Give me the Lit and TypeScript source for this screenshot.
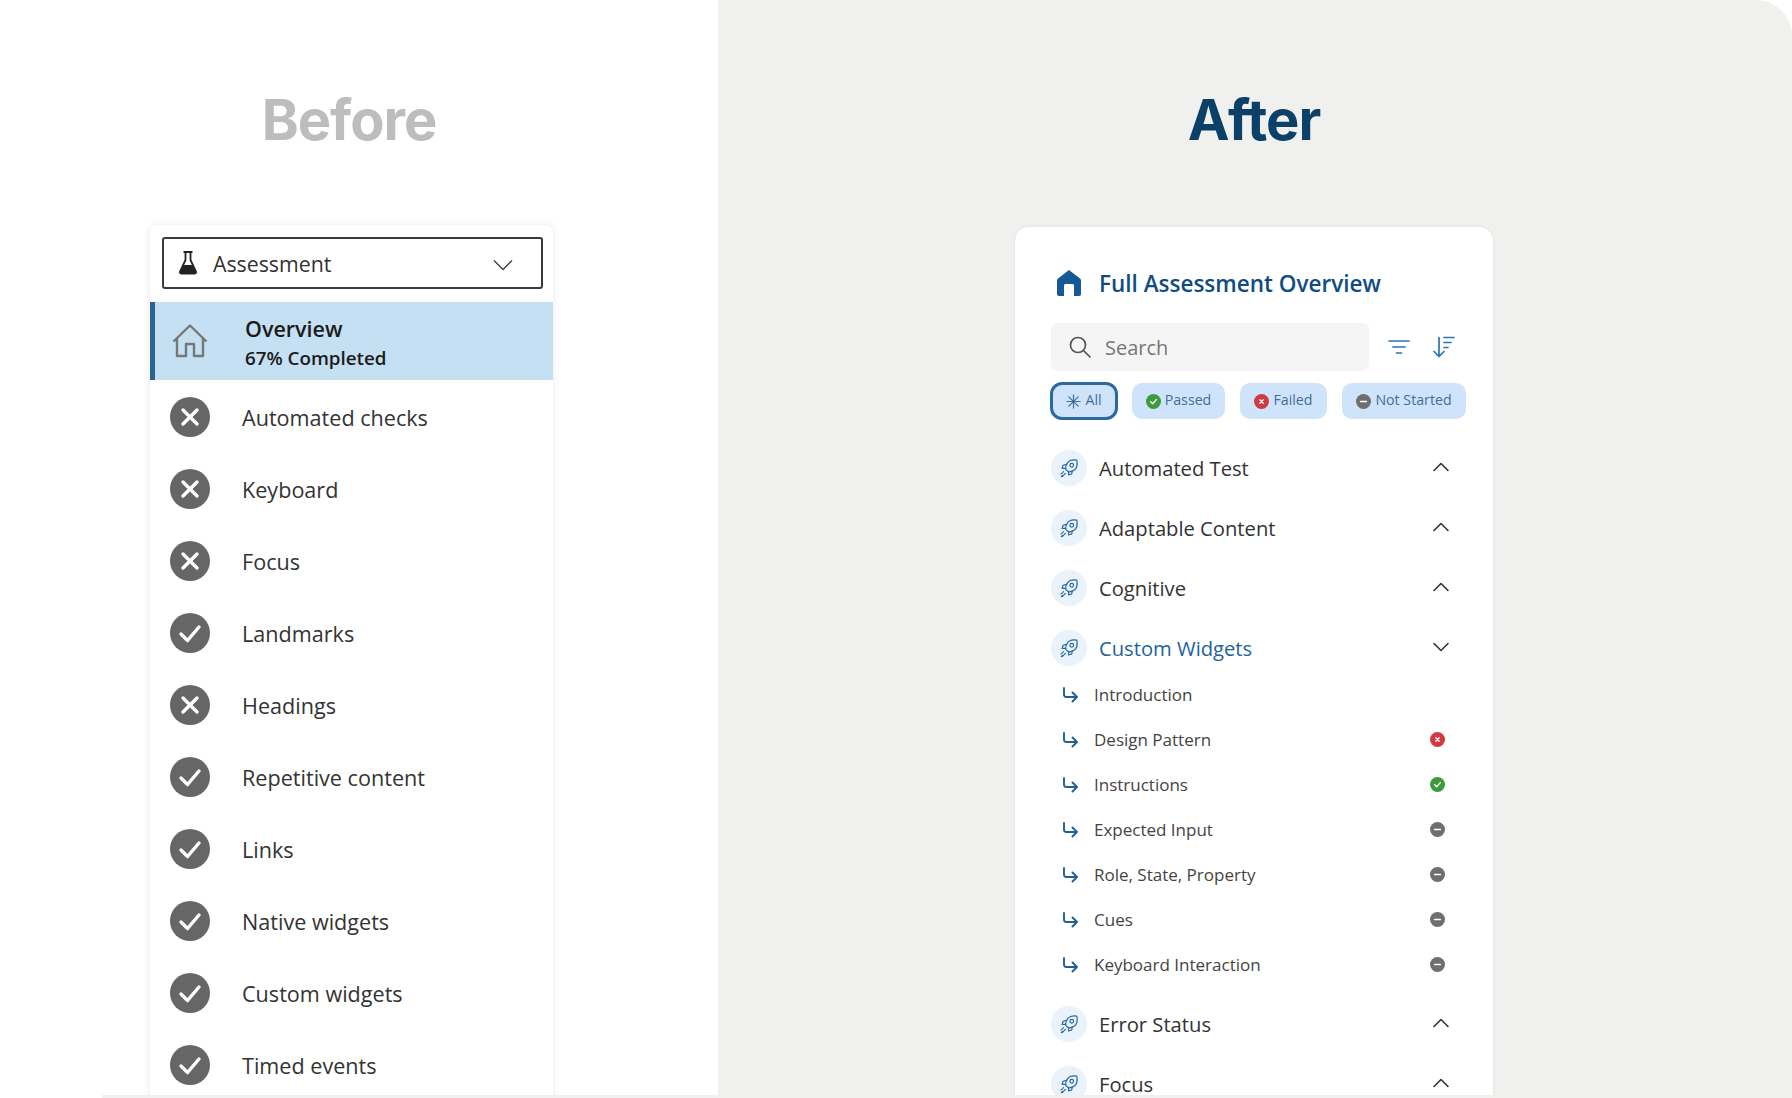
import { LitElement, html, css, svg } from "lit";
import { customElement } from "lit/decorators.js";

type Status = "pass" | "fail" | "none" | "";

const checks: [string, boolean][] = [
  ["Automated checks", false],
  ["Keyboard", false],
  ["Focus", false],
  ["Landmarks", true],
  ["Headings", false],
  ["Repetitive content", true],
  ["Links", true],
  ["Native widgets", true],
  ["Custom widgets", true],
  ["Timed events", true],
];

const subItems: [string, Status][] = [
  ["Introduction", ""],
  ["Design Pattern", "fail"],
  ["Instructions", "pass"],
  ["Expected Input", "none"],
  ["Role, State, Property", "none"],
  ["Cues", "none"],
  ["Keyboard Interaction", "none"],
];

const rocket = html`<svg viewBox="0 0 24 24" width="22" height="22" fill="none" stroke="#2a6a9e" stroke-width="1.300" stroke-linecap="round" stroke-linejoin="round">
  <path d="M20.500 3.500c-4-.8-8.500.3-10.500 3.500-1.500 2.300-2 4.500-1.500 6.500l2.500 2.500c2 .5 4.200 0 6.500-1.500 3.700-2.300 3.800-6.800 3-11z" />
  <circle cx="15" cy="9" r="2" />
  <path d="M9 8 5.500 9l-1 3.500h4M15.500 15l-.5 3.500-3.500 1v-4" />
  <path d="M6 16 3.500 18.500M8 18l-3 3M5 20l-1.500 1.500" stroke-dasharray="1.800 1.100" />
</svg>`;

const chevronUp = html`<svg class="chev" viewBox="0 0 18 10" width="18" height="10" fill="none" stroke="#333" stroke-width="1.600" stroke-linecap="round" stroke-linejoin="round"><path d="M2 8.500 9 1.500l7 7" /></svg>`;
const chevronDown = html`<svg class="chev" viewBox="0 0 18 10" width="18" height="10" fill="none" stroke="#333" stroke-width="1.600" stroke-linecap="round" stroke-linejoin="round"><path d="M2 1.500 9 8.500l7-7" /></svg>`;

function dot(s: Status, size: number) {
  const colors: Record<string, string> = { pass: "#3d9a3d", fail: "#d13a40", none: "#6e6e6e" };
  if (!s) return html``;
  const mark =
    s === "pass"
      ? svg`<path d="M5 8.300 7.100 10.300 11 6" stroke="#fff" stroke-width="1.500" fill="none" stroke-linecap="round" stroke-linejoin="round" />`
      : s === "fail"
        ? svg`<path d="M6.200 6.200l3.600 3.600M9.800 6.200l-3.600 3.600" stroke="#fff" stroke-width="1.400" stroke-linecap="round" />`
        : svg`<path d="M5 8h6" stroke="#fff" stroke-width="1.800" stroke-linecap="round" />`;
  return html`<svg viewBox="0 0 16 16" width=${size} height=${size}><circle cx="8" cy="8" r="8" fill=${colors[s]} />${mark}</svg>`;
}

function bigStatus(ok: boolean) {
  return html`<svg viewBox="0 0 40 40" width="40" height="40">
    <circle cx="20" cy="20" r="20" fill="#666" />
    ${ok
      ? svg`<path d="M11 21l6.500 6.500L29 14" stroke="#fff" stroke-width="3.400" fill="none" stroke-linecap="round" stroke-linejoin="round" />`
      : svg`<path d="M13 13l14 14M27 13 13 27" stroke="#fff" stroke-width="3.400" stroke-linecap="round" />`}
  </svg>`;
}

@customElement("app-root")
export class AppRoot extends LitElement {
  static styles = css`
    :host {
      display: block;
      width: 1792px;
      height: 1098px;
      overflow: hidden;
      background: #fff;
      font-family: "Open Sans", "Noto Sans", sans-serif;
      color: #333;
    }
    .frame {
      display: flex;
      height: 1095px;
      overflow: hidden;
      border-radius: 36px 36px 0 0;
    }
    .strip {
      height: 3px;
      margin-left: 102px;
      background: #f0f0ef;
    }
    .side {
      display: flex;
      flex-direction: column;
      align-items: center;
      overflow: hidden;
    }
    .before {
      width: 718px;
      flex: none;
      box-sizing: border-box;
      background: #fff;
    }
    .after {
      flex: 1;
      background: #f0f0ef;
      align-items: flex-start;
      padding-left: 297px;
    }
    h1 {
      font-family: Inter, "Liberation Sans", sans-serif;
      font-weight: 700;
      font-size: 56px;
      line-height: 68px;
      margin: 86px 0 0;
      letter-spacing: -1px;
    }
    .before h1 {
      color: #bdbdbd;
      margin-right: 20px;
    }
    .after h1 {
      color: #0b4068;
      width: 478px;
      text-align: center;
    }

    /* before card */
    .old-card {
      width: 403px;
      margin-top: 71px;
      margin-right: 15px;
      background: #fff;
      border-radius: 8px 8px 0 0;
      box-shadow: 0 0 8px rgba(0, 0, 0, 0.09);
      flex: 1;
    }
    .select {
      display: flex;
      align-items: center;
      height: 52px;
      margin: 12px 10px 13px 12px;
      padding: 0 28px 0 14px;
      box-sizing: border-box;
      border: 2px solid #3a3a3a;
      border-radius: 3px;
      font-size: 21.300px;
      color: #333;
    }
    .select span {
      flex: 1;
      margin-left: 15px;
    }
    .select .caret {
      margin-top: 3px;
    }
    .current {
      display: flex;
      align-items: center;
      height: 78px;
      background: #c5dff3;
      border-left: 5px solid #2a6496;
      padding-left: 17px;
    }
    .current .texts {
      margin-left: 37px;
      margin-top: 4px;
      color: #1c1c1c;
      font-weight: 600;
    }
    .current .t1 {
      font-size: 21.500px;
      line-height: 30px;
    }
    .current .t2 {
      font-size: 18.800px;
      line-height: 29px;
    }
    .check {
      display: flex;
      align-items: center;
      height: 72px;
      padding-left: 20px;
      gap: 32px;
      font-size: 21.600px;
      color: #333;
    }
    .checks {
      padding-top: 1px;
    }

    /* after card */
    .new-card {
      width: 478px;
      margin-top: 73px;
      background: #fff;
      border-radius: 14px 14px 0 0;
      box-shadow: 0 0 4px rgba(0, 0, 0, 0.06);
      padding: 0 36px;
      box-sizing: border-box;
      flex: 1;
    }
    .title {
      display: flex;
      align-items: center;
      gap: 18px;
      height: 30px;
      margin: 41px 0 0 6px;
      font-size: 22.500px;
      font-weight: 600;
      color: #0f4c81;
      white-space: nowrap;
    }
    .tools {
      display: flex;
      align-items: center;
      margin-top: 25px;
    }
    .search {
      display: flex;
      align-items: center;
      width: 318px;
      height: 48px;
      box-sizing: border-box;
      padding-left: 18px;
      gap: 14px;
      background: #f5f5f5;
      border-radius: 6px;
      font-size: 20px;
      color: #777;
    }
    .tool-icons {
      display: flex;
      align-items: center;
      gap: 23px;
      margin-left: 19px;
    }
    .chips {
      display: flex;
      align-items: center;
      gap: 15px;
      margin-top: 11px;
      margin-left: -1px;
      white-space: nowrap;
    }
    .chip {
      display: flex;
      flex: none;
      align-items: center;
      justify-content: center;
      gap: 4px;
      height: 36px;
      box-sizing: border-box;
      background: #cfe4fa;
      border-radius: 10px;
      font-size: 14.200px;
      line-height: 18px;
      color: #3f6f9c;
    }
    .chip span {
      margin-top: -2px;
    }
    .chip.on {
      height: 38px;
      border: 3px solid #2a6a9e;
      border-radius: 12px;
      margin-right: -1px;
    }
    .rows {
      margin-top: 18px;
    }
    .row {
      display: flex;
      align-items: center;
      height: 60px;
      font-size: 20.200px;
      line-height: 20px;
      color: #333;
    }
    .row.open {
      color: #1f629b;
    }
    .row .badge {
      display: flex;
      align-items: center;
      justify-content: center;
      width: 36px;
      height: 36px;
      border-radius: 50%;
      background: #eaf3fb;
      margin-right: 12px;
      flex: none;
    }
    .row .name {
      flex: 1;
    }
    .chev {
      margin-right: 7px;
      margin-top: -3px;
    }
    .sub {
      display: flex;
      align-items: center;
      height: 45px;
      padding-left: 11px;
      font-size: 17px;
      color: #444;
    }
    .sub .name {
      flex: 1;
      margin-left: 16px;
    }
    .sub .status {
      display: flex;
      margin-right: 12px;
      margin-top: -1px;
    }
    .subs {
      margin-top: -6px;
      margin-bottom: 7px;
    }
  `;

  render() {
    return html`
      <div class="frame">
        <section class="side before">
          <h1>Before</h1>
          <div class="old-card">
            <div class="select">
              <svg viewBox="0 0 20 24" width="20" height="24">
                <path d="M5.500 1h9M7.500 1v8L2 20.500c-.4 1 .2 2 1.300 2h13.400c1.100 0 1.700-1 1.300-2L12.500 9V1" fill="none" stroke="#222" stroke-width="1.800" />
                <path d="M5 14h10l3 7.500c0 .6-.5 1-1 1H3c-.6 0-1-.4-1-1z" fill="#222" />
              </svg>
              <span>Assessment</span>
              <svg class="caret" viewBox="0 0 20 12" width="20" height="12" fill="none" stroke="#444" stroke-width="1.500"><path d="M1 1.500l9 9 9-9" /></svg>
            </div>
            <div class="current">
              <svg viewBox="0 0 36 34" width="36" height="34" fill="none" stroke="#777" stroke-width="2.400" stroke-linejoin="round">
                <path d="M1.500 17.500 18 1.500l16.500 16" />
                <path d="M5 14.500V32h9V20h8v12h9V14.500" />
              </svg>
              <div class="texts">
                <div class="t1">Overview</div>
                <div class="t2">67% Completed</div>
              </div>
            </div>
            <div class="checks">
              ${checks.map(([name, ok]) => html`<div class="check">${bigStatus(ok)}<span>${name}</span></div>`)}
            </div>
          </div>
        </section>

        <section class="side after">
          <h1>After</h1>
          <div class="new-card">
            <div class="title">
              <svg viewBox="0 0 24 26" width="24" height="26"><path d="M12 0 23 8.500c.7.500 1 1.200 1 2V24c0 1.100-.9 2-2 2h-5V15.500c0-.8-.7-1.500-1.500-1.500h-7C7.700 14 7 14.700 7 15.500V26H2c-1.100 0-2-.9-2-2V10.500c0-.8.300-1.500 1-2z" fill="#155a92" /></svg>
              Full Assessment Overview
            </div>
            <div class="tools">
              <div class="search">
                <svg viewBox="0 0 22 22" width="22" height="22" fill="none" stroke="#555" stroke-width="1.700" stroke-linecap="round"><circle cx="9" cy="9" r="7.500" /><path d="M14.500 14.500 21 21" /></svg>
                Search
              </div>
              <div class="tool-icons">
                <svg viewBox="0 0 22 14" width="22" height="14" fill="none" stroke="#2a74b5" stroke-width="1.700" stroke-linecap="round"><path d="M1 1h20M5 7h12M8.500 13h5" /></svg>
                <svg viewBox="0 0 22 22" width="22" height="22" fill="none" stroke="#2a74b5" stroke-width="1.700" stroke-linecap="round" stroke-linejoin="round"><path d="M6 1.500V20M1 15.500 6 20.500l5-5M11 1.500h10M11 6.500h7M11 11.500h4" /></svg>
              </div>
            </div>
            <div class="chips">
              <div class="chip on" style="width:68px">
                <svg viewBox="0 0 16 16" width="15" height="15" fill="none" stroke="#3f6f9c" stroke-width="1.300" stroke-linecap="round"><path d="M8 1v14M1 8h14M3 3l10 10M13 3 3 13" /></svg>
                <span>All</span>
              </div>
              <div class="chip" style="width:93px">${dot("pass", 15)}<span>Passed</span></div>
              <div class="chip" style="width:87px">${dot("fail", 15)}<span>Failed</span></div>
              <div class="chip" style="width:124px">${dot("none", 15)}<span>Not Started</span></div>
            </div>
            <div class="rows">
              ${["Automated Test", "Adaptable Content", "Cognitive"].map((n) => this.row(n))}
              ${this.row("Custom Widgets", true)}
              <div class="subs">
                ${subItems.map(
                  ([name, s]) => html`<div class="sub">
                    <svg viewBox="0 0 16 16" width="16" height="16" fill="none" stroke="#1f5f96" stroke-width="1.900" stroke-linecap="round" stroke-linejoin="round"><path d="M2 1v6.500c0 1.400 1 2.500 2.500 2.500H15M10.500 5.500 15 10l-4.500 4.500" /></svg>
                    <span class="name">${name}</span>
                    <span class="status">${dot(s, 15)}</span>
                  </div>`,
                )}
              </div>
              ${["Error Status", "Focus"].map((n) => this.row(n))}
            </div>
          </div>
        </section>
      </div>
      <div class="strip"></div>
    `;
  }

  private row(name: string, open = false) {
    return html`<div class="row ${open ? "open" : ""}">
      <span class="badge">${rocket}</span>
      <span class="name">${name}</span>
      ${open ? chevronDown : chevronUp}
    </div>`;
  }
}
